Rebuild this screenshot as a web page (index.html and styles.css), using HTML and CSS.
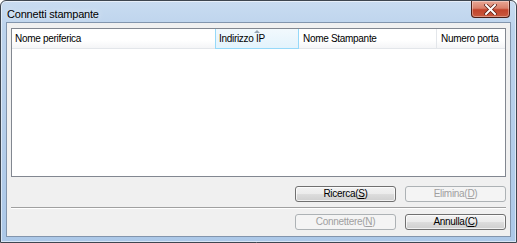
FILE: index.html
```html
<!DOCTYPE html>
<html lang="it">
<head>
    <meta charset="UTF-8">
    <title>Connetti stampante</title>
    <link rel="stylesheet" href="styles.css">
</head>
<body>
    <div class="window">
        <!-- Title bar -->
        <div class="title-bar">
            <span class="title">Connetti stampante</span>
            <button class="close-btn" aria-label="Chiudi">
                <svg width="13" height="11" viewBox="0 0 13 11">
                    <path d="M2 1 L11 10 M11 1 L2 10" stroke="#5a1e14" stroke-width="3.4" stroke-linecap="square"/>
                    <path d="M2 1 L11 10 M11 1 L2 10" stroke="#fff" stroke-width="2" stroke-linecap="square"/>
                </svg>
            </button>
        </div>

        <!-- Client area -->
        <div class="client">
            <div class="list-view">
                <div class="list-header">
                    <div class="col col-name">Nome periferica</div>
                    <div class="col col-ip sorted">Indirizzo IP</div>
                    <div class="col col-printer">Nome Stampante</div>
                    <div class="col col-port">Numero porta</div>
                </div>
                <div class="list-body"></div>
            </div>

            <div class="button-row">
                <button class="btn">Ricerca(<u>S</u>)</button>
                <button class="btn" disabled>Elimina(<u>D</u>)</button>
            </div>

            <div class="separator"></div>

            <div class="button-row">
                <button class="btn" disabled>Connettere(<u>N</u>)</button>
                <button class="btn">Annulla(<u>C</u>)</button>
            </div>
        </div>
    </div>
</body>
</html>
```

FILE: styles.css
```css
/* Reset */
* {
    margin: 0;
    padding: 0;
    box-sizing: border-box;
}

body {
    width: 517px;
    height: 243px;
    overflow: hidden;
    font-family: 'Liberation Sans', Arial, sans-serif;
    background-color: #fff;
}

/* Window frame */
.window {
    width: 517px;
    height: 243px;
    display: flex;
    flex-direction: column;
    padding: 0 5px 5px 5px;
    border: 1px solid #3e4650;
    border-radius: 6px 6px 0 0;
    background: linear-gradient(to bottom, #c9dcf1 0%, #bcd3ec 12%, #acc8e8 100%);
    box-shadow: inset 0 0 0 1px rgba(255, 255, 255, 0.55);
}

/* Title bar */
.title-bar {
    height: 21px;
    display: flex;
    justify-content: space-between;
    align-items: flex-start;
}

.title {
    font-size: 11px;
    letter-spacing: -0.2px;
    color: #000;
    line-height: 14px;
    padding-top: 6px;
    padding-left: 1px;
    text-shadow: 0 0 6px rgba(255, 255, 255, 0.9);
}

.close-btn {
    width: 39px;
    height: 17px;
    margin-right: 1px;
    border: 1px solid #4b1e16;
    border-top: none;
    border-radius: 0 0 4px 4px;
    background: linear-gradient(to bottom, #e8a795 0%, #d9806b 45%, #c2442c 55%, #c95a3f 100%);
    box-shadow: inset 0 0 0 1px rgba(255, 255, 255, 0.35);
    display: flex;
    align-items: center;
    justify-content: center;
}

/* Client area */
.client {
    flex: 1;
    display: flex;
    flex-direction: column;
    padding: 5px 4px 0 4px;
    background-color: #f0f0f0;
    border: 1px solid #8295ad;
}

/* List view */
.list-view {
    height: 149px;
    background-color: #fff;
    border: 1px solid #828790;
    display: flex;
    flex-direction: column;
}

.list-header {
    display: flex;
    height: 20px;
    background: linear-gradient(to bottom, #fff 0%, #fff 60%, #f4f5f7 100%);
    border-bottom: 1px solid #e3e6ea;
}

.col {
    font-size: 10px;
    letter-spacing: -0.3px;
    line-height: 19px;
    color: #000;
    padding-left: 4px;
    border-right: 1px solid #e3e6ea;
    white-space: nowrap;
    overflow: hidden;
}

.col-name {
    width: 203px;
    padding-left: 3px;
    border-right: none;
}

.col-ip {
    width: 84px;
}

.col-printer {
    width: 138px;
}

.col-port {
    flex: 1;
    border-right: none;
}

.col.sorted {
    position: relative;
    height: 20px;
    padding-left: 3px;
    background: linear-gradient(to bottom, #f2f9fd 0%, #e3f3fc 100%);
    border: 1px solid #96d9f9;
    border-top: none;
    line-height: 19px;
}

/* Sort arrow on top of the sorted column */
.col.sorted::before {
    content: "";
    position: absolute;
    top: 1px;
    left: 38px;
    border-left: 3px solid transparent;
    border-right: 3px solid transparent;
    border-bottom: 3px solid #97a5b4;
}

.list-body {
    flex: 1;
}

/* Buttons */
.button-row {
    display: flex;
    justify-content: flex-end;
    gap: 9px;
    margin-top: 9px;
}

.separator + .button-row {
    margin-top: 5px;
}

.btn {
    width: 101px;
    height: 16px;
    font-family: 'Liberation Sans', Arial, sans-serif;
    font-size: 10px;
    letter-spacing: -0.3px;
    line-height: 14px;
    color: #000;
    border: 1px solid #707070;
    border-radius: 3px;
    background: linear-gradient(to bottom, #f2f2f2 0%, #ebebeb 50%, #dddddd 51%, #cfcfcf 100%);
    box-shadow: inset 0 0 0 1px rgba(255, 255, 255, 0.7);
}

.btn:disabled {
    color: #a0a0a0;
    border-color: #adb2b5;
    background: #f4f4f4;
    box-shadow: none;
}

/* Separator */
.separator {
    height: 2px;
    margin-top: 5px;
    border-top: 1px solid #a0a0a0;
    border-bottom: 1px solid #fff;
}
```
